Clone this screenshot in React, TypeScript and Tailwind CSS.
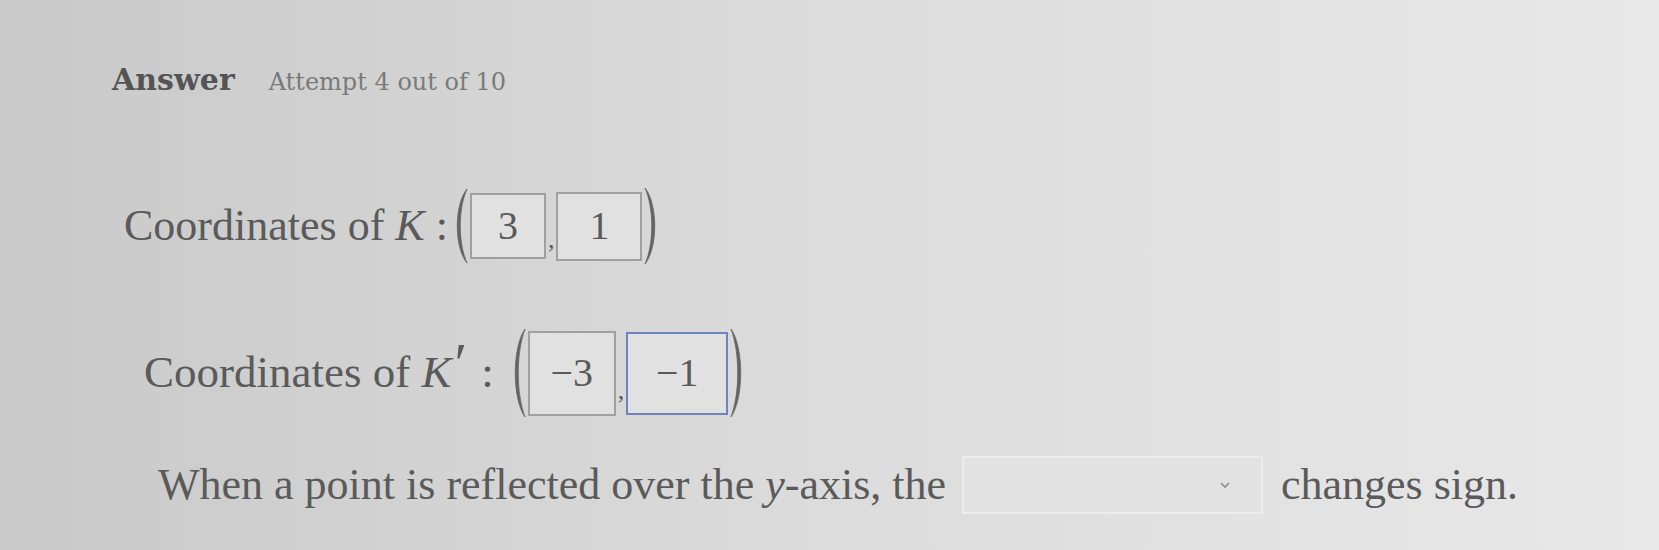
import React from 'react'

function Paren({ side, h }: { side: 'l' | 'r'; h: number }) {
  const w = 18
  const d =
    side === 'l'
      ? `M${w - 3} 1 C2 ${h * 0.22}, 2 ${h * 0.78}, ${w - 3} ${h - 1} C6 ${h * 0.72}, 6 ${h * 0.28}, ${w - 3} 1 Z`
      : `M3 1 C${w - 2} ${h * 0.22}, ${w - 2} ${h * 0.78}, 3 ${h - 1} C${w - 6} ${h * 0.72}, ${w - 6} ${h * 0.28}, 3 1 Z`
  return (
    <svg width={w} height={h} viewBox={`0 0 ${w} ${h}`} className="shrink-0">
      <path d={d} fill="#646464" stroke="#646464" strokeWidth="0.8" />
    </svg>
  )
}

function Box({ value, w, h, active }: { value: string; w: string; h: string; active?: boolean }) {
  return (
    <div
      className={`flex items-center justify-center border-2 bg-[#e1e1e1] text-[40px] leading-none text-[#5a5a5a] ${w} ${h} ${
        active ? 'border-[#6f82c4]' : 'border-[#a0a0a0]'
      }`}
    >
      {value}
    </div>
  )
}

export default function App() {
  return (
    <div className="min-h-[550px] w-full bg-gradient-to-r from-[#c9c9c9] via-[#dcdcdc] to-[#e8e8e8] font-['Liberation_Serif',serif] text-[#5a5a5a]">
      <div className="flex items-baseline gap-[34px] pl-[112px] pt-[57px]">
        <span className="font-['DejaVu_Serif',serif] text-[30px] font-bold text-[#545454]">Answer</span>
        <span className="font-['DejaVu_Serif',serif] text-[24px] text-[#7a7a7a]">Attempt 4 out of 10</span>
      </div>

      <div className="mt-[85px] flex items-center pl-[124px]">
        <span className="text-[44px]">
          Coordinates of <i>K</i>&nbsp;:
        </span>
        <div className="ml-[4px] flex items-center">
          <Paren side="l" h={76} />
          <Box value="3" w="w-[76px]" h="h-[66px]" />
          <span className="mx-[2px] self-end pb-[12px] text-[26px] leading-none">,</span>
          <Box value="1" w="w-[86px]" h="h-[69px]" />
          <Paren side="r" h={78} />
        </div>
      </div>

      <div className="mt-[63px] flex items-center pl-[144px]">
        <span className="text-[45px]">
          Coordinates of <i className="mr-[3px]">K</i>
          <span className="relative -top-[4px] mr-[14px] text-[58px] leading-none">′</span>:
        </span>
        <div className="ml-[16px] flex items-center">
          <Paren side="l" h={90} />
          <Box value="−3" w="w-[88px]" h="h-[85px]" />
          <span className="mx-[2px] self-end pb-[14px] text-[26px] leading-none">,</span>
          <Box value="−1" w="w-[102px]" h="h-[83px]" active />
          <Paren side="r" h={90} />
        </div>
      </div>

      <div className="mt-[34px] flex items-center pl-[158px]">
        <span className="text-[44px]">
          When a point is reflected over the <i>y</i>-axis, the
        </span>
        <div className="ml-[16px] flex h-[58px] w-[301px] items-center justify-end border-2 border-[#ececec] bg-[#e2e2e2] pr-[30px]">
          <svg width="12" height="8" viewBox="0 0 12 8">
            <path d="M2 2 L6 6 L10 2" fill="none" stroke="#8a8a8a" strokeWidth="1.6" />
          </svg>
        </div>
        <span className="ml-[18px] text-[44px]">changes sign.</span>
      </div>
    </div>
  )
}
